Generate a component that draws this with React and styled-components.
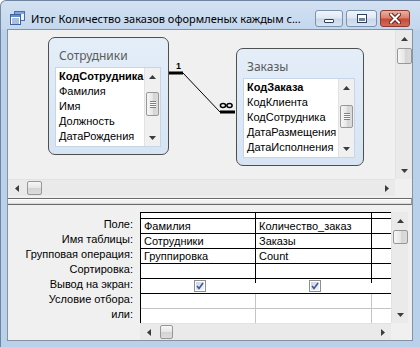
import React from 'react';
import styled, { createGlobalStyle, css } from 'styled-components';

const Global = createGlobalStyle`
  html, body { margin: 0; padding: 0; background: #fff; }
  body { width: 420px; height: 347px; overflow: hidden; }
`;

const TAHOMA = `"Liberation Sans", Arial, sans-serif`;
const SEGOE = `"Noto Sans", "Open Sans", sans-serif`;

const Window = styled.div`
  width: 420px;
  height: 347px;
  box-sizing: border-box;
  display: flex;
  flex-direction: column;
  background: linear-gradient(#d3e1f1 0px, #c3d7ee 28px, #b9d1ea 30px);
  border-top: 1px solid rgba(50, 70, 100, 0.55);
  border-left: 1px solid rgba(50, 70, 100, 0.55);
  border-top-left-radius: 6px;
  overflow: hidden;
`;

const TitleBar = styled.div`
  height: 28px;
  flex: none;
  box-sizing: border-box;
  padding: 6px 0 0 9px;
  display: flex;
  align-items: center;
`;

const TitleText = styled.div`
  margin-left: 6px;
  font: 11px ${SEGOE};
  color: #000;
  white-space: nowrap;
  flex: 1;
  overflow: hidden;
`;

const Buttons = styled.div`
  display: flex;
  gap: 3px;
  margin-right: 10px;
  margin-left: 6px;
  flex: none;
`;

const CapButton = styled.div`
  width: ${p => p.$w}px;
  height: 17px;
  box-sizing: border-box;
  border-radius: 3px;
  display: flex;
  align-items: center;
  justify-content: center;
  ${p => p.$close
    ? css`
        border: 1px solid #8a3b30;
        background: linear-gradient(#eab0a4 0%, #dc7f6e 45%, #c84a36 55%, #d26c58 100%);
      `
    : css`
        border: 1px solid #7f92ab;
        background: linear-gradient(#f0f5fb 0%, #dfe8f4 45%, #c8d7ea 55%, #d8e4f2 100%);
      `}
`;

const MinGlyph = styled.span`
  width: 10px;
  height: 4px;
  box-sizing: border-box;
  margin-top: 6px;
  border: 1px solid #2e4260;
  border-radius: 1px;
  background: #fff;
`;

const MaxGlyph = styled.span`
  width: 10px;
  height: 9px;
  box-sizing: border-box;
  border: 1px solid #2e4260;
  background: #6f819b;
  box-shadow: inset 0 0 0 1px #fff, inset 0 3px 0 #fff;
`;

const Client = styled.div`
  flex: 1;
  margin: 0 7px 6px 6px;
  border: 1px solid #86929f;
  background: #f0f0f0;
  display: flex;
  flex-direction: column;
  min-height: 0;
`;

const TopPane = styled.div`
  height: 166px;
  flex: none;
  display: grid;
  grid-template-columns: 1fr 17px;
  grid-template-rows: 1fr 17px;
`;

const Canvas = styled.div`
  position: relative;
  overflow: hidden;
  background: #f0f0f0;
`;

const Corner = styled.div`
  background: #f0f0f0;
`;

const Splitter = styled.div`
  height: 9px;
  flex: none;
  box-sizing: border-box;
  padding-top: 2px;
  display: flex;
  flex-direction: column;
`;

const SplitBar = styled.div`
  height: 7px;
  box-sizing: border-box;
  border-top: 1px solid #6b6b6b;
  border-bottom: 1px solid #6b6b6b;
  border-right: 1px solid #9a9a9a;
  background: linear-gradient(#ffffff 0 1px, #f2f2f2 1px 4px, #d9d9d9 4px);
`;

const BottomPane = styled.div`
  flex: 1;
  display: flex;
  min-height: 0;
`;

const LabelCol = styled.div`
  width: 132px;
  flex: none;
  box-sizing: border-box;
  padding: 13px 7px 0 0;
  display: flex;
  flex-direction: column;
`;

const Label = styled.div`
  height: 15px;
  line-height: 15px;
  text-align: right;
  font: 11px ${TAHOMA};
  color: #000;
  white-space: nowrap;
`;

const GridWrap = styled.div`
  flex: 1;
  box-sizing: border-box;
  padding: 7px 4px 0 0;
  display: grid;
  grid-template-columns: 1fr 17px;
  grid-template-rows: 111px 17px;
`;

const DesignGrid = styled.div`
  display: grid;
  grid-template-columns: 115px 116px 1fr;
  grid-auto-rows: min-content;
  align-content: start;
  border-left: 1px solid #000;
  border-top: 1px solid #000;
  background: #fff;
  overflow: hidden;
`;

const toneBottom = { dark: '#000', check: '#000', light: '#c4c4c4', none: 'transparent' };
const toneRight = { dark: '1px solid #000', check: '1px solid transparent', light: '1px solid #c4c4c4', none: '1px solid transparent' };

const Cell = styled.div`
  box-sizing: border-box;
  height: ${p => p.$h}px;
  background: #fff;
  border-bottom: 1px solid ${p => toneBottom[p.$bottom]};
  border-right: ${p => (p.$last ? 'none' : toneRight[p.$tone])};
  ${p => p.$tone === 'check' && !p.$last && css`
    background: #fff linear-gradient(#000, #000) right top / 1px 4px no-repeat;
    border-right: none;
    padding-right: 1px;
  `}
  padding-left: 3px;
  font: 11px ${TAHOMA};
  color: #000;
  line-height: 14px;
  white-space: nowrap;
  overflow: hidden;
  display: flex;
  align-items: center;
  justify-content: ${p => (p.$center ? 'center' : 'flex-start')};
`;

/* scrollbars */
const Bar = styled.div`
  display: flex;
  box-sizing: border-box;
  background: ${p => p.$bg || '#eaeaea'};
  flex-direction: ${p => (p.$h ? 'row' : 'column')};
  align-items: center;
  ${p => (p.$h
    ? css`border-top: 1px solid #e2e2e2;`
    : css`border-left: 1px solid #e2e2e2;`)}
  ${p => p.$w && css`width: ${p.$w}px; flex: none;`}
`;

const ArrowBox = styled.div`
  flex: none;
  display: flex;
  align-items: center;
  justify-content: center;
  ${p => (p.$h ? css`width: 17px; height: 100%;` : css`height: 17px; width: 100%;`)}
`;

const Spacer = styled.div`
  flex: 1;
`;

const Thumb = styled.div`
  flex: none;
  box-sizing: border-box;
  border: 1px solid #979797;
  border-radius: 2px;
  display: flex;
  align-items: center;
  justify-content: center;
  ${p => (p.$h
    ? css`
        height: 14px;
        width: ${p.$len}px;
        margin-left: ${p.$off}px;
        background: linear-gradient(#f6f6f6, #e6e6e6 50%, #d4d4d4 51%, #dcdcdc);
      `
    : css`
        width: ${p.$thin ? 13 : 15}px;
        height: ${p.$len}px;
        margin-top: ${p.$off}px;
        background: linear-gradient(to right, #f6f6f6, #e6e6e6 50%, #d4d4d4 51%, #dcdcdc);
      `)}
`;

const Grip = styled.span`
  width: 6px;
  height: 7px;
  background: repeating-linear-gradient(#6e6e6e 0 1px, #fff 1px 2px);
  opacity: 0.85;
`;

const ArrowIcon = ({ dir }) => {
  const pts = {
    up: '0,4 3.5,0 7,4',
    down: '0,0 3.5,4 7,0',
    left: '4,0 0,3.5 4,7',
    right: '0,0 4,3.5 0,7',
  }[dir];
  const h = dir === 'up' || dir === 'down';
  return (
    <svg width={h ? 7 : 4} height={h ? 4 : 7} viewBox={h ? '0 0 7 4' : '0 0 4 7'}>
      <polygon points={pts} fill="#3c3c3c" />
    </svg>
  );
};

const VScroll = ({ off, len, grip, bg, thin, w = 17 }) => (
  <Bar $bg={bg} $w={w}>
    <ArrowBox><ArrowIcon dir="up" /></ArrowBox>
    <Thumb $off={off} $len={len} $thin={thin}>{grip && <Grip />}</Thumb>
    <Spacer />
    <ArrowBox><ArrowIcon dir="down" /></ArrowBox>
  </Bar>
);

const HScroll = ({ off, len }) => (
  <Bar $h>
    <ArrowBox $h><ArrowIcon dir="left" /></ArrowBox>
    <Thumb $h $off={off} $len={len} />
    <Spacer />
    <ArrowBox $h><ArrowIcon dir="right" /></ArrowBox>
  </Bar>
);

/* table nodes */
const TableNode = styled.div`
  position: absolute;
  left: ${p => p.$x}px;
  top: ${p => p.$y}px;
  width: ${p => p.$w}px;
  box-sizing: border-box;
  border: 1px solid #4f4f4f;
  border-radius: 7px;
  background: linear-gradient(#e4eef9, #d6e4f3);
  padding: 0 ${p => p.$pr}px 7px 6px;
  display: flex;
  flex-direction: column;
`;

const NodeTitle = styled.div`
  height: 29px;
  box-sizing: border-box;
  padding: 9px 0 0 4px;
  font: 12px ${SEGOE};
  color: #5b5b5b;
  line-height: 18px;
  white-space: nowrap;
`;

const FieldList = styled.div`
  height: 80px;
  box-sizing: border-box;
  border: 1px solid #c6d6e8;
  background: #fff;
  display: flex;
`;

const FieldItems = styled.div`
  flex: 1;
  padding: 2px 0 0 3px;
  overflow: hidden;
`;

const FieldItem = styled.div`
  height: 15px;
  line-height: 15px;
  font: ${p => (p.$key ? 'bold' : 'normal')} 11px ${TAHOMA};
  color: #000;
  white-space: nowrap;
`;

const Links = styled.svg`
  position: absolute;
  left: 0;
  top: 0;
  width: 100%;
  height: 100%;
  pointer-events: none;
`;

const AppIcon = () => (
  <svg width="15" height="14" viewBox="0 0 15 14">
    <rect x="4.5" y="0.5" width="10" height="9" fill="#eef3fa" stroke="#4a6fa8" />
    <rect x="5" y="1" width="9" height="2" fill="#7ea6dc" />
    <rect x="0.5" y="3.5" width="10" height="10" fill="#fff" stroke="#3d64a0" />
    <rect x="1" y="4" width="9" height="2" fill="#5d8fd3" />
    <line x1="2" y1="8" x2="9" y2="8" stroke="#5b7fb8" />
    <line x1="2" y1="10" x2="9" y2="10" stroke="#5b7fb8" />
    <line x1="2" y1="12" x2="9" y2="12" stroke="#5b7fb8" />
  </svg>
);

const CloseGlyph = () => (
  <svg width="12" height="11" viewBox="0 0 12 11">
    <path d="M2 1.5 L10 9.5 M10 1.5 L2 9.5" stroke="#5a2019" strokeWidth="4" strokeLinecap="square" />
    <path d="M2 1.5 L10 9.5 M10 1.5 L2 9.5" stroke="#fff" strokeWidth="2" strokeLinecap="square" />
  </svg>
);

const CheckBox = () => (
  <svg width="12" height="12" viewBox="0 0 12 12">
    <defs>
      <linearGradient id="cbg" x1="0" y1="0" x2="1" y2="1">
        <stop offset="0" stopColor="#cfd5dd" />
        <stop offset="1" stopColor="#f3f5f8" />
      </linearGradient>
    </defs>
    <rect x="0.5" y="0.5" width="11" height="11" fill="#fff" stroke="#8e8f8f" />
    <rect x="2" y="2" width="8" height="8" fill="url(#cbg)" />
    <path d="M3 6 L5 8.5 L9 3" fill="none" stroke="#3a58a3" strokeWidth="1.6" />
  </svg>
);

const employees = ['КодСотрудника', 'Фамилия', 'Имя', 'Должность', 'ДатаРождения'];
const orders = ['КодЗаказа', 'КодКлиента', 'КодСотрудника', 'ДатаРазмещения', 'ДатаИсполнения'];

const rows = [
  { label: 'Поле:', c1: 'Фамилия', c2: 'Количество_заказ', tone: 'dark', bottom: 'dark' },
  { label: 'Имя таблицы:', c1: 'Сотрудники', c2: 'Заказы', tone: 'dark', bottom: 'dark' },
  { label: 'Групповая операция:', c1: 'Группировка', c2: 'Count', tone: 'dark', bottom: 'dark' },
  { label: 'Сортировка:', tone: 'dark', bottom: 'dark' },
  { label: 'Вывод на экран:', check: true, tone: 'check', bottom: 'dark' },
  { label: 'Условие отбора:', tone: 'light', bottom: 'light' },
  { label: 'или:', tone: 'light', bottom: 'none' },
];

const Node = ({ x, y, w, pr, title, fields, thumbOff, thumbLen }) => (
  <TableNode $x={x} $y={y} $w={w} $pr={pr}>
    <NodeTitle>{title}</NodeTitle>
    <FieldList>
      <FieldItems>
        {fields.map((f, i) => (
          <FieldItem key={f} $key={i === 0}>{f}</FieldItem>
        ))}
      </FieldItems>
      <VScroll off={thumbOff} len={thumbLen} grip bg="#f0f0f0" thin w={16} />
    </FieldList>
  </TableNode>
);

export default function App() {
  return (
    <>
      <Global />
      <Window>
        <TitleBar>
          <AppIcon />
          <TitleText>Итог Количество заказов оформленых каждым с...</TitleText>
          <Buttons>
            <CapButton $w={28}><MinGlyph /></CapButton>
            <CapButton $w={31}><MaxGlyph /></CapButton>
            <CapButton $w={30} $close><CloseGlyph /></CapButton>
          </Buttons>
        </TitleBar>
        <Client>
          <TopPane>
            <Canvas>
              <Node x={40} y={7} w={121} pr={7} title="Сотрудники" fields={employees} thumbOff={7} thumbLen={24} />
              <Node x={228} y={18} w={128} pr={8} title="Заказы" fields={orders} thumbOff={9} thumbLen={23} />
              <Links>
                <line x1="161" y1="43" x2="175" y2="43" stroke="#000" strokeWidth="3" />
                <line x1="175" y1="43" x2="212" y2="82" stroke="#000" strokeWidth="1" />
                <line x1="212" y1="82" x2="227" y2="82" stroke="#000" strokeWidth="3" />
                <text x="168" y="39" fontFamily="Liberation Sans, Arial, sans-serif" fontWeight="bold" fontSize="9" fill="#000">1</text>
                <ellipse cx="215" cy="75.5" rx="2.6" ry="2" fill="none" stroke="#000" strokeWidth="1.5" />
                <ellipse cx="221.5" cy="75.5" rx="2.6" ry="2" fill="none" stroke="#000" strokeWidth="1.5" />
              </Links>
            </Canvas>
            <VScroll off={1} len={16} />
            <HScroll off={2} len={15} />
            <Corner />
          </TopPane>
          <Splitter><SplitBar /></Splitter>
          <BottomPane>
            <LabelCol>
              {rows.map(r => <Label key={r.label}>{r.label}</Label>)}
            </LabelCol>
            <GridWrap>
              <DesignGrid>
                <Cell $h={6} $tone="dark" $bottom="dark" />
                <Cell $h={6} $tone="dark" $bottom="dark" />
                <Cell $h={6} $tone="dark" $bottom="dark" $last />
                {rows.map(r => (
                  <React.Fragment key={r.label}>
                    <Cell $h={15} $tone={r.tone} $bottom={r.bottom} $center={r.check}>
                      {r.check ? <CheckBox /> : r.c1}
                    </Cell>
                    <Cell $h={15} $tone={r.tone} $bottom={r.bottom} $center={r.check}>
                      {r.check ? <CheckBox /> : r.c2}
                    </Cell>
                    <Cell $h={15} $tone={r.tone} $bottom={r.bottom} $last />
                  </React.Fragment>
                ))}
              </DesignGrid>
              <VScroll off={1} len={14} />
              <HScroll off={3} len={13} />
              <Corner />
            </GridWrap>
          </BottomPane>
        </Client>
      </Window>
    </>
  );
}
